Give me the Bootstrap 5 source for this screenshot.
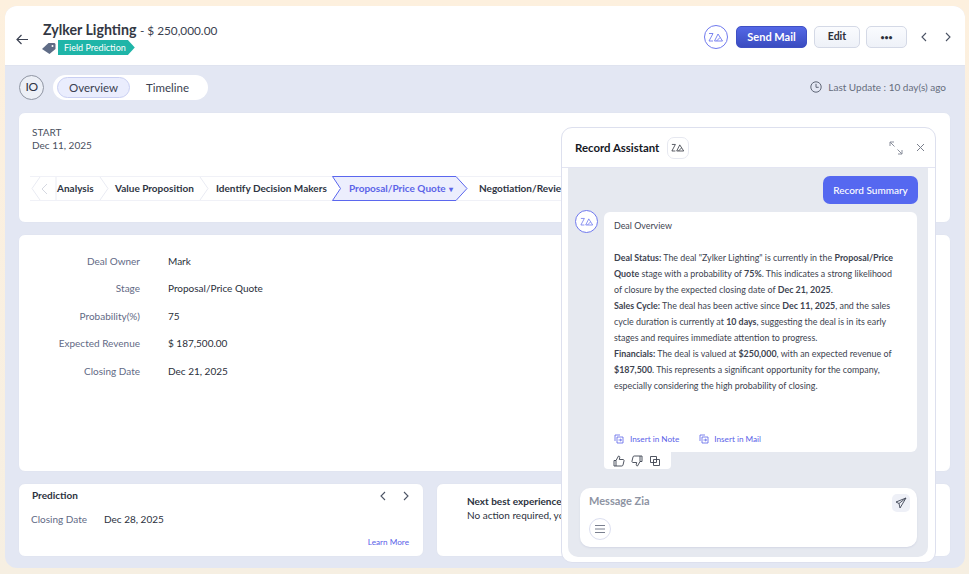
<!DOCTYPE html>
<html lang="en"><head><meta charset="utf-8"><title>Deal</title>
<link href="https://cdn.jsdelivr.net/npm/bootstrap@5.3.0/dist/css/bootstrap.min.css" rel="stylesheet">
<style>
html,body{height:574px;overflow:hidden}
body{background:linear-gradient(#fdf0de,#f6efe2);font-family:"Lato",sans-serif;color:#2c3240;font-size:10px;position:relative}
.shell{margin:6px 4px 6px 5px;height:562px;width:960px;background:#e3e7f3;border-radius:12px;overflow:hidden;display:flex;flex-direction:column}
.hdr{height:60px;background:#fff;border-bottom:1px solid #dfe3ef;padding:5px 12px 0 10px;flex:none}
.ttl{font-size:14.2px;font-weight:700;color:#333844;line-height:17px}
.ttl span{font-weight:400;font-size:11.8px;color:#3a4150}
.fp{background:#1fb5a8;color:#fff;font-size:9px;line-height:15px;height:15px;padding:0 9px 0 6px;clip-path:polygon(0 0,91% 0,100% 50%,91% 100%,0 100%);display:inline-block}
.tagrow{gap:2px;margin-top:1px;margin-left:-1px}
.backic{margin-top:2px;margin-left:-1px;margin-right:9px}
.hright{margin-top:-2px}
.zring{width:24px;height:24px;border:1px solid #6f79ee;border-radius:50%;display:flex;align-items:center;justify-content:center;background:#fff;flex:none}
.bsend{background:linear-gradient(#5468e6,#3a4cc0);color:#fff;font-weight:700;font-size:11px;height:22px;width:71px;padding:0;border:1px solid #3f50c4;border-radius:5px}
.bgrey{background:linear-gradient(#fafbfe,#eef1f8);border:1px solid #d4d9e6;border-radius:5px;font-size:10.5px;font-weight:700;height:22px;padding:0;color:#2b2f3a}
.bedit{width:46px;margin-left:7px}
.dots{font-size:7px;width:41px;margin-left:6px}
.sub{height:46px;padding:0 19px 4px 14px;flex:none}
.iocirc{width:25px;height:25px;border:1px solid #8f95a3;border-radius:50%;font-size:12px;background:#eceff6;letter-spacing:-.5px}
.tabs{background:#fff;border-radius:13px;height:25px;padding:2px 3px 2px 4px;font-size:11.5px;width:155px;margin-left:9px}
.tab1{background:#eaedfd;border:1px solid #c9cff2;border-radius:11px;width:73px;text-align:center;line-height:19px;color:#3a4050}
.tab2{flex:1;text-align:center;line-height:21px;color:#3a4050}
.lu{font-size:10px;color:#666d7d}
.body1{padding:0 14px 0 13px;flex:1;display:flex;flex-direction:column;gap:11px}
.pane{background:#fff;border:1px solid #e1e5f1;border-radius:7px}
.stagecard{height:111px;padding:13px;overflow:hidden;flex:none}
.stagecard .s1{font-size:10px;line-height:13px;color:#4a5060}
.strip{margin-top:24px;margin-left:-2px;height:25px;border-top:1px solid #f0f1f7;border-bottom:1px solid #f0f1f7;font-weight:700;font-size:10px;color:#2f3543;white-space:nowrap;width:560px;position:relative}
.stg{display:block;position:absolute;top:3px;line-height:16px}
.active-stg{position:absolute;left:302px;top:-1px;width:136px;height:25px}
.detail{height:238px;padding:12.5px 0 0;flex:none}
.frow{display:flex;height:27.5px;align-items:center;font-size:10px}
.frow .k{width:121px;text-align:right;color:#626a85}
.frow .v{margin-left:28px;color:#2a2f3a}
.bot{display:flex;gap:12px;height:74px;flex:none}
.pred{width:406px;padding:4px 13px;position:relative}
.predrow{margin-top:9px}
.nbe{flex:1;padding:10px 30px;line-height:14px;font-size:10px}
.pnl{position:absolute;left:561px;top:127px;width:375px;height:436px;background:#fff;border:1px solid #dde0ee;border-radius:11px;display:flex;flex-direction:column;z-index:5;padding:0 0 5px;overflow:hidden}
.phd{height:40px;padding:0 10px 0 13px;border-bottom:1px solid #e3e5f2;flex:none}
.pbody{flex:1;margin:0 7px 0 6px;background:#e6e9f0;border-radius:0 0 10px 10px;position:relative;padding:8px 10px 0 6px;display:flex;flex-direction:column}
.rs{align-self:flex-end;background:#5568f0;color:#fff;font-size:10px;width:95px;height:28px;border-radius:7px;text-align:center;line-height:28px;font-weight:500}
.msg{margin-left:30px;margin-top:8px;width:313px;height:240px;background:#fff;border-radius:6px 6px 6px 0;padding:6px 10px;font-size:8.9px;line-height:16px;color:#3d4350;position:relative;flex:none;white-space:nowrap}
.msg b{font-weight:700}
.act{position:absolute;left:10px;bottom:5px;color:#5a62e8;line-height:16px;font-size:8.2px;display:flex;gap:20px}
.thumbs{margin-left:30px;width:67px;height:17px;background:#fff;border-radius:0 0 4px 4px;flex:none;padding:1px 9px;gap:6px}
.inp{position:absolute;left:12px;top:320px;width:337px;height:59px;background:#fff;border-radius:10px;box-shadow:0 1px 2px #d3d7e4;padding:6px 7px 6px 9px}
.zsm{position:absolute;left:7px;top:42px;width:23px;height:23px}
</style></head><body>
<div class="shell">
 <div class="hdr d-flex align-items-center">
  <svg width="16" height="16" viewBox="0 0 16 16" class="backic" fill="none" stroke="#3c4252" stroke-width="1.2"><path d="M14 8.500H3M7.500 4 3 8.500 7.500 13"/></svg>
  <div class="ms-1">
   <div class="ttl">Zylker Lighting <span>- $ 250,000.00</span></div>
   <div class="d-flex align-items-center tagrow"><svg width="14" height="12" viewBox="0 0 14 12"><path d="M0 7 6.500 1h6l1 1v5l-6 5z" fill="#5f6c86"/><circle cx="10.500" cy="4" r="1" fill="#fff"/></svg><span class="fp">Field Prediction</span></div>
  </div>
  <div class="ms-auto d-flex align-items-center hright">
   <div class="zring me-2"><svg width="16" height="10" viewBox="0 0 16 10" fill="none" stroke="#6f79ee" stroke-width=".9"><path d="M1 1.500h4L1 9h4M6.500 9 10 2l4.500 7zM8.500 9 12 5.500"/></svg></div>
   <button class="btn bsend" type="button">Send Mail</button>
   <button class="btn bgrey bedit" type="button">Edit</button>
   <button class="btn bgrey dots" type="button">•••</button>
   <svg width="10" height="10" viewBox="0 0 10 10" fill="none" stroke="#4c5465" stroke-width="1.100" style="margin-left:12px"><path d="M7 1 3 5l4 4"/></svg>
   <svg width="10" height="10" viewBox="0 0 10 10" fill="none" stroke="#4c5465" stroke-width="1.100" style="margin-left:14px"><path d="M3 1l4 4-4 4"/></svg>
  </div>
 </div>
 <div class="sub d-flex align-items-center">
  <div class="iocirc d-flex align-items-center justify-content-center">IO</div>
  <div class="tabs d-flex"><div class="tab1">Overview</div><div class="tab2">Timeline</div></div>
  <div class="ms-auto lu d-flex align-items-center" style="gap:6px"><svg width="12" height="12" viewBox="0 0 12 12" fill="none" stroke="#5f6676" stroke-width="1"><circle cx="6" cy="6" r="5.200"/><path d="M6 2.800V6.300h2.700"/></svg>Last Update : 10 day(s) ago</div>
 </div>
 <div class="body1">
  <div class="pane stagecard">
   <div class="s1">START</div><div class="s1">Dec 11, 2025</div>
   <div class="strip">
    <svg class="active-stg" viewBox="0 0 136 25"><path d="M.5.500H124L135 12.500 124 24.500H.5l8-12z" fill="#eceefd" stroke="#5b67ee"/></svg>
    <svg width="300" height="25" style="position:absolute;left:0;top:-1px" fill="none" stroke="#e9ebf3"><path d="M10 1 2 12.500 10 24M26 1v23M70 1l8 11.500L70 24M170 1l8 11.500L170 24"/></svg>
    <svg width="12" height="14" style="position:absolute;left:9px;top:5px" fill="none" stroke="#d5d8e1"><path d="M8 2 3 7l5 5"/></svg>
    <span class="stg" style="left:27px">Analysis</span>
    <span class="stg" style="left:85px">Value Proposition</span>
    <span class="stg" style="left:186px">Identify Decision Makers</span>
    <span class="stg" style="left:319px;color:#5b63e8">Proposal/Price Quote <span style="font-size:8px;vertical-align:0;margin-left:1px">▾</span></span>
    <span class="stg" style="left:449px">Negotiation/Review</span>
   </div>
  </div>
  <div class="pane detail">
   <div class="frow"><div class="k">Deal Owner</div><div class="v">Mark</div></div>
   <div class="frow"><div class="k">Stage</div><div class="v">Proposal/Price Quote</div></div>
   <div class="frow"><div class="k">Probability(%)</div><div class="v">75</div></div>
   <div class="frow"><div class="k">Expected Revenue</div><div class="v">$ 187,500.00</div></div>
   <div class="frow"><div class="k">Closing Date</div><div class="v">Dec 21, 2025</div></div>
  </div>
  <div class="bot">
   <div class="pane pred">
    <div class="d-flex align-items-center justify-content-between"><b>Prediction</b>
     <span class="d-flex" style="gap:13px;margin-right:-1px"><svg width="10" height="10" viewBox="0 0 10 10" fill="none" stroke="#4c5465" stroke-width="1.100"><path d="M7 1 3 5l4 4"/></svg><svg width="10" height="10" viewBox="0 0 10 10" fill="none" stroke="#4c5465" stroke-width="1.100"><path d="M3 1l4 4-4 4"/></svg></span></div>
    <div class="d-flex predrow"><span style="color:#626a85;margin-left:-1px">Closing Date</span><span style="margin-left:17px">Dec 28, 2025</span></div>
    <div class="text-end position-absolute" style="right:14px;bottom:8px;color:#5a62e8;font-size:8.200px">Learn More</div>
   </div>
   <div class="pane nbe"><b>Next best experience</b><br>No action required, you are on track</div>
  </div>
 </div>
</div>

<div class="pnl">
 <div class="phd d-flex align-items-center">
  <b style="font-size:11.400px;color:#16181f">Record Assistant</b>
  <span class="d-flex align-items-center justify-content-center ms-2" style="width:22px;height:22px;border:1px solid #e6e8f0;border-radius:7px"><svg width="14" height="9" viewBox="0 0 16 10" fill="none" stroke="#30343f" stroke-width=".9"><path d="M1 1.500h4L1 9h4M6.500 9 10 2l4.500 7zM8.500 9 12 5.500"/></svg></span>
  <svg class="ms-auto" width="14" height="14" viewBox="0 0 14 14" fill="none" stroke="#8a8f9c" stroke-width="1"><path d="M1 5V1h4M1 1l4.500 4.500M13 9v4H9M13 13 8.500 8.500"/></svg>
  <svg width="9" height="9" viewBox="0 0 9 9" fill="none" stroke="#7a7f8c" style="margin-left:13px" stroke-width="1"><path d="M1 1l7 7M8 1 1 8"/></svg>
 </div>
 <div class="pbody">
  <div class="rs">Record Summary</div>
  <div class="zring zsm"><svg width="14" height="9" viewBox="0 0 16 10" fill="none" stroke="#6f79ee" stroke-width=".9"><path d="M1 1.500h4L1 9h4M6.500 9 10 2l4.500 7zM8.500 9 12 5.500"/></svg></div>
  <div class="msg">Deal Overview<br><br><b>Deal Status:</b> The deal "Zylker Lighting" is currently in the <b>Proposal/Price<br>Quote</b> stage with a probability of <b>75%</b>. This indicates a strong likelihood<br>of closure by the expected closing date of <b>Dec 21, 2025</b>.<br><b>Sales Cycle:</b> The deal has been active since <b>Dec 11, 2025</b>, and the sales<br>cycle duration is currently at <b>10 days</b>, suggesting the deal is in its early<br>stages and requires immediate attention to progress.<br><b>Financials:</b> The deal is valued at <b>$250,000</b>, with an expected revenue of<br><b>$187,500</b>. This represents a significant opportunity for the company,<br>especially considering the high probability of closing.
   <div class="act"><span class="d-flex align-items-center" style="gap:6px"><svg width="10" height="10" viewBox="0 0 10 10" fill="none" stroke="#5a62e8" stroke-width=".8"><path d="M1 7V1h5M3 3h6v6H3zM4.500 6h3M6 4.800 7.500 6 6 7.200"/></svg>Insert in Note</span><span class="d-flex align-items-center" style="gap:5px"><svg width="10" height="10" viewBox="0 0 10 10" fill="none" stroke="#5a62e8" stroke-width=".8"><path d="M1 7V1h5M3 3h6v6H3zM4.500 6h3M6 4.800 7.500 6 6 7.200"/></svg>Insert in Mail</span></div>
  </div>
  <div class="thumbs d-flex align-items-center">
   <svg width="12" height="12" viewBox="0 0 12 12" fill="none" stroke="#3d4350" stroke-width=".9"><path d="M1 5.500h2V11H1zM3 5.500 5.500 1c1 0 1.500.8 1.200 1.800L6.300 4.500H10c.8 0 1.200.7 1 1.400L10 10c-.1.600-.6 1-1.200 1H3"/></svg>
   <svg width="12" height="12" viewBox="0 0 12 12" fill="none" stroke="#3d4350" stroke-width=".9"><path d="M11 6.500H9V1h2zM9 6.500 6.500 11c-1 0-1.500-.8-1.200-1.800l.4-1.700H2c-.8 0-1.200-.7-1-1.400L2 2c.1-.6.600-1 1.200-1H9"/></svg>
   <svg width="12" height="12" viewBox="0 0 12 12" fill="none" stroke="#3d4350" stroke-width=".9"><path d="M1.500 1.500h6v6h-6zM4.500 4.500h6v6h-6z"/></svg>
  </div>
  <div class="inp">
   <div class="d-flex justify-content-between"><span style="font-size:11px;color:#8e94a3;font-weight:700;line-height:14px">Message Zia</span>
    <span class="d-flex align-items-center justify-content-center" style="width:18px;height:18px;background:#eef0f7;border-radius:5px"><svg width="12" height="12" viewBox="0 0 12 12" fill="none" stroke="#3f4656" stroke-width=".9"><path d="M11 1 1 5l3 1.500L5 11zM11 1 4 6.500"/></svg></span></div>
   <span class="d-flex align-items-center justify-content-center" style="width:22px;height:22px;border:1px solid #dcdff0;border-radius:50%;margin-top:6px"><svg width="12" height="10" viewBox="0 0 12 10" stroke="#7a8090" stroke-width="1"><path d="M1 1.500h10M1 5h10M1 8.500h10"/></svg></span>
  </div>
 </div>
</div>
<script src="https://cdn.jsdelivr.net/npm/bootstrap@5.3.0/dist/js/bootstrap.bundle.min.js"></script>
</body></html>
